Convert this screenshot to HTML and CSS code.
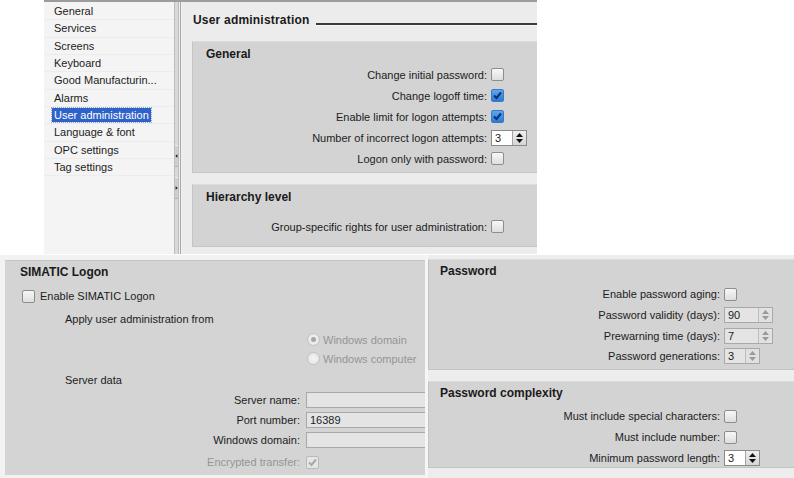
FILE: index.html
```html
<!DOCTYPE html>
<html>
<head>
<meta charset="utf-8">
<link rel="stylesheet" href="styles.css">
</head>
<body>
<div class="canvas">

  <section class="shot shot-top">
    <nav class="nav">
      <div class="nav-item"><span>General</span></div>
      <div class="nav-item"><span>Services</span></div>
      <div class="nav-item"><span>Screens</span></div>
      <div class="nav-item"><span>Keyboard</span></div>
      <div class="nav-item"><span>Good Manufacturin...</span></div>
      <div class="nav-item"><span>Alarms</span></div>
      <div class="nav-item selected"><span>User administration</span></div>
      <div class="nav-item"><span>Language &amp; font</span></div>
      <div class="nav-item"><span>OPC settings</span></div>
      <div class="nav-item"><span>Tag settings</span></div>
    </nav>
    <div class="splitter">
      <div class="splitter-bar">
        <div class="split-btn btn-left"><svg width="5" height="7" viewBox="0 0 5 7"><path d="M4 0.5 L0.5 3.5 L4 6.5 Z" fill="#111"/></svg></div>
        <div class="split-btn btn-right"><svg width="5" height="7" viewBox="0 0 5 7"><path d="M1 0.5 L4.5 3.5 L1 6.5 Z" fill="#111"/></svg></div>
      </div>
      <div class="splitter-line"></div>
    </div>
    <main class="content">
      <div class="page-title"><span class="page-title-text">User administration</span><span class="page-title-rule"></span></div>

      <div class="group group-general">
        <div class="group-title">General</div>
        <div class="row"><span class="lbl">Change initial password:</span><span class="cb"></span></div>
        <div class="row"><span class="lbl">Change logoff time:</span><span class="cb checked"><svg width="11" height="11" viewBox="0 0 11 11"><path d="M2 5.5 L4.5 8 L9 2.5" fill="none" stroke="#0b2f6b" stroke-width="2"/></svg></span></div>
        <div class="row"><span class="lbl">Enable limit for logon attempts:</span><span class="cb checked"><svg width="11" height="11" viewBox="0 0 11 11"><path d="M2 5.5 L4.5 8 L9 2.5" fill="none" stroke="#0b2f6b" stroke-width="2"/></svg></span></div>
        <div class="row"><span class="lbl">Number of incorrect logon attempts:</span><span class="spin"><span class="spin-val">3</span><span class="spin-btn"><svg width="9" height="12" viewBox="0 0 9 12"><path d="M1 5 L4.5 1 L8 5 Z M1 7 L4.5 11 L8 7 Z" fill="#111"/></svg></span></span></div>
        <div class="row"><span class="lbl">Logon only with password:</span><span class="cb"></span></div>
      </div>

      <div class="group group-hier">
        <div class="group-title">Hierarchy level</div>
        <div class="row"><span class="lbl">Group-specific rights for user administration:</span><span class="cb"></span></div>
      </div>
    </main>
  </section>

  <section class="shot shot-bl">
    <div class="panel panel-simatic">
      <div class="panel-title">SIMATIC Logon</div>
      <div class="enable-row"><span class="cb"></span><span>Enable SIMATIC Logon</span></div>
      <div class="sub-head apply">Apply user administration from</div>
      <div class="radios">
        <div class="radio-row"><span class="radio on"></span><span class="dis">Windows domain</span></div>
        <div class="radio-row"><span class="radio"></span><span class="dis">Windows computer</span></div>
      </div>
      <div class="sub-head server">Server data</div>
      <div class="srow"><span class="slbl">Server name:</span><span class="field"></span></div>
      <div class="srow"><span class="slbl">Port number:</span><span class="field">16389</span></div>
      <div class="srow"><span class="slbl">Windows domain:</span><span class="field"></span></div>
      <div class="srow enc"><span class="slbl dis">Encrypted transfer:</span><span class="cb disabled"><svg width="11" height="11" viewBox="0 0 11 11"><path d="M2 5.5 L4.5 8 L9 2.5" fill="none" stroke="#a9a9a9" stroke-width="2"/></svg></span></div>
    </div>
  </section>

  <section class="shot shot-br">
    <div class="group pw">
      <div class="group-title">Password</div>
      <div class="prow"><span class="plbl">Enable password aging:</span><span class="cb"></span></div>
      <div class="prow"><span class="plbl">Password validity (days):</span><span class="spin dim wide"><span class="spin-val">90</span><span class="spin-btn"><svg width="9" height="12" viewBox="0 0 9 12"><path d="M1 5 L4.5 1 L8 5 Z M1 7 L4.5 11 L8 7 Z" fill="#9a9a9a"/></svg></span></span></div>
      <div class="prow"><span class="plbl">Prewarning time (days):</span><span class="spin dim wide"><span class="spin-val">7</span><span class="spin-btn"><svg width="9" height="12" viewBox="0 0 9 12"><path d="M1 5 L4.5 1 L8 5 Z M1 7 L4.5 11 L8 7 Z" fill="#9a9a9a"/></svg></span></span></div>
      <div class="prow"><span class="plbl">Password generations:</span><span class="spin dim"><span class="spin-val">3</span><span class="spin-btn"><svg width="9" height="12" viewBox="0 0 9 12"><path d="M1 5 L4.5 1 L8 5 Z M1 7 L4.5 11 L8 7 Z" fill="#9a9a9a"/></svg></span></span></div>
    </div>
    <div class="group pwc">
      <div class="group-title">Password complexity</div>
      <div class="prow"><span class="plbl">Must include special characters:</span><span class="cb"></span></div>
      <div class="prow"><span class="plbl">Must include number:</span><span class="cb"></span></div>
      <div class="prow"><span class="plbl">Minimum password length:</span><span class="spin"><span class="spin-val">3</span><span class="spin-btn"><svg width="9" height="12" viewBox="0 0 9 12"><path d="M1 5 L4.5 1 L8 5 Z M1 7 L4.5 11 L8 7 Z" fill="#111"/></svg></span></span></div>
    </div>
  </section>

</div>
</body>
</html>
```

FILE: styles.css
```css
* { box-sizing: border-box; }
html, body { margin: 0; padding: 0; background: #ffffff; }
body {
  font-family: "Liberation Sans", Arial, sans-serif;
  font-size: 11px;
  color: #1c1c1c;
}
.canvas { position: relative; width: 794px; height: 478px; overflow: hidden; background: #fff; }
.shot { position: absolute; overflow: hidden; }

/* ---------- top screenshot ---------- */
.shot-top {
  left: 44px; top: 0; width: 493px; height: 254px;
  display: flex;
  border-top: 2px solid #9c9c9c;
  background: #ececec;
}
.nav {
  width: 130px; flex: none;
  background: #f4f4f4;
  padding-top: 1px;
}
.nav-item {
  height: 17.33px;
  line-height: 17.33px;
  padding-left: 8px;
  border-bottom: 1px solid #ececec;
  white-space: nowrap;
}
.nav-item span { padding: 1px 2px; }
.nav-item.selected span {
  background: #2f62c8;
  color: #fff;
  outline: 1px dotted #8aa4de;
}
.splitter { width: 8px; flex: none; display: flex; background: #f0f0f0; }
.splitter-bar {
  width: 5px; margin-left: 0;
  background: #d9d9d9;
  border-left: 1px solid #bdbdbd;
  border-right: 1px solid #bdbdbd;
  padding-top: 143px;
}
.split-btn {
  height: 22px; display: flex; align-items: center; justify-content: center;
  background: #cfcfcf;
  border-top: 1px solid #efefef;
  border-bottom: 1px solid #b0b0b0;
}
.split-btn svg { width: 3px; height: 6px; }
.btn-right { margin-top: 10px; }
.splitter-line { width: 1px; margin-left: 1px; background: #a9a9a9; }

.content { flex: 1; padding: 9px 0 0 10px; min-width: 0; }
.page-title { display: flex; align-items: center; height: 18px; padding-left: 1px; }
.page-title-text { font-weight: bold; font-size: 12px; color: #1a1a1a; white-space: nowrap; letter-spacing: 0.2px; }
.page-title-rule {
  flex: 1; margin-left: 6px; margin-top: 8px;
  height: 3px;
  border-top: 2px solid #3a3a3a;
  border-bottom: 1px solid #f8f8f8;
}

.group {
  background: #d3d3d3;
  border: 1px solid #c4c4c4;
  border-top-color: #dcdcdc;
}
.group-general { margin-top: 12px; width: 370px; height: 132px; padding-top: 4px; }
.group-hier { margin-top: 11px; width: 370px; height: 63px; padding-top: 4px; }
.group-title {
  font-weight: bold; font-size: 12px; line-height: 16px;
  padding-left: 13px; color: #1a1a1a;
  margin-bottom: 2px;
}
.group-hier .group-title { margin-bottom: 11px; }
.row {
  display: grid;
  grid-template-columns: 294px auto;
  column-gap: 4px;
  align-items: center;
  height: 21px;
}
.lbl { text-align: right; white-space: nowrap; }

/* controls */
.cb {
  display: inline-flex; align-items: center; justify-content: center;
  width: 13px; height: 13px;
  border: 1px solid #8d8d8d;
  border-radius: 2px;
  background: linear-gradient(#f7f7f7, #dedede);
}
.cb.checked {
  border-color: #3a78c8;
  background: linear-gradient(#5da7f0, #2a7ad6);
}
.cb.disabled { border-color: #b9b9b9; background: #e6e6e6; }
.spin {
  display: inline-flex; height: 16px;
  border: 1px solid #8a8a8a;
  background: #fff;
  width: 36px;
}
.spin-val { flex: 1; padding-left: 3px; line-height: 14px; font-size: 11px; }
.spin-btn {
  width: 14px; flex: none;
  display: flex; align-items: center; justify-content: center;
  background: linear-gradient(#eeeeee, #d6d6d6);
  border-left: 1px solid #a5a5a5;
}
.spin.dim { background: #e4e4e4; border-color: #a9a9a9; }
.spin.dim .spin-btn { background: #e1e1e1; border-left-color: #bdbdbd; }
.spin.wide { width: 49px; }

/* ---------- bottom-left screenshot ---------- */
.shot-bl {
  left: 0; top: 255px; width: 425px; height: 223px;
  background: #f2f2f2;
  padding: 5px 0 0 5px;
}
.panel-simatic {
  width: 440px; height: 215px;
  background: #d4d4d4;
  border-top: 1px solid #c6c6c6;
}
.panel-title {
  font-weight: bold; font-size: 12px; line-height: 16px;
  padding-left: 15px; margin-top: 3px; color: #1a1a1a;
}
.enable-row {
  display: flex; align-items: center; gap: 5px;
  height: 16px; margin-top: 8px; padding-left: 17px;
}
.sub-head { line-height: 16px; padding-left: 60px; }
.apply { margin-top: 7px; }
.radios { margin-top: 3px; padding-left: 302px; }
.radio-row { display: flex; align-items: center; gap: 3px; height: 19px; }
.radio {
  width: 13px; height: 13px; border-radius: 50%;
  border: 1px solid #c2c2c2;
  background: radial-gradient(circle, #f4f4f4, #e2e2e2);
  display: inline-flex; align-items: center; justify-content: center;
}
.radio.on::after {
  content: ""; width: 5px; height: 5px; border-radius: 50%; background: #a6a6a6;
}
.dis { color: #959595; }
.server { margin-top: 4px; }
.srow {
  display: grid;
  grid-template-columns: 295px auto;
  column-gap: 6px;
  align-items: center;
  height: 20px;
}
.sub-head.server { margin-bottom: 2px; }
.slbl { text-align: right; white-space: nowrap; }
.field {
  display: block; height: 16px; width: 140px;
  background: #e4e4e4;
  border: 1px solid #a8a8a8;
  padding-left: 3px; line-height: 14px;
}
.srow.enc { margin-top: 2px; }

/* ---------- bottom-right screenshot ---------- */
.shot-br {
  left: 425px; top: 255px; width: 369px; height: 223px;
  background: #ededed;
  border-left: 3px solid #f6f6f6;
  padding-top: 4px;
}
.pw { height: 111px; width: 380px; padding-top: 3px; }
.pwc { margin-top: 11px; height: 87px; width: 380px; padding-top: 3px; }
.pw .group-title, .pwc .group-title { padding-left: 11px; margin-bottom: 5px; }
.prow {
  display: grid;
  grid-template-columns: 291px auto;
  column-gap: 4px;
  align-items: center;
  height: 20.7px;
}
.plbl { text-align: right; white-space: nowrap; }
```
